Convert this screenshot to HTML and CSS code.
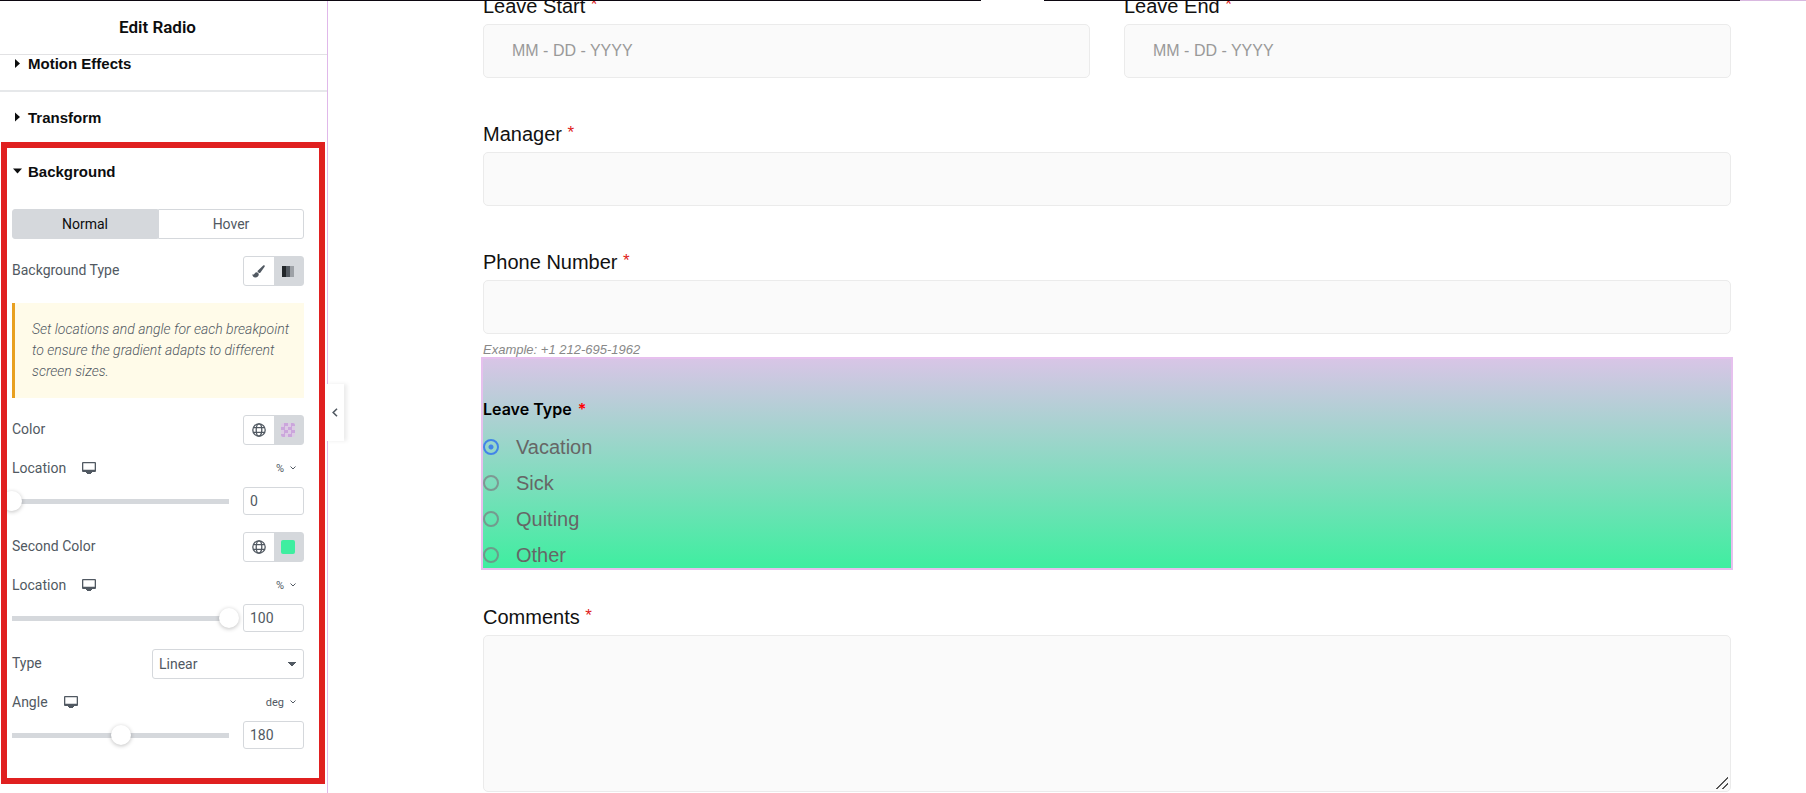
FILE: index.html
```html
<!DOCTYPE html>
<html lang="en">
  <head>
    <meta charset="utf-8" />
    <meta name="viewport" content="width=device-width, initial-scale=1.0" />
    <title>Edit Radio</title>
    <link rel="stylesheet" href="styles.css">
  </head>

  <body>
    <svg class="sprite" aria-hidden="true">
      <symbol id="icon-desktop" viewBox="0 0 14 12">
        <path d="M1 0h12a1 1 0 0 1 1 1v8a1 1 0 0 1-1 1h-3v1H9v1H5v-1H4v-1H1a1 1 0 0 1-1-1V1a1 1 0 0 1 1-1zm.3 1.2v6.600h11.400V1.200z" fill="currentColor" fill-rule="evenodd" />
      </symbol>
      <symbol id="icon-globe" viewBox="0 0 14 14">
        <g fill="none" stroke="currentColor" stroke-width="1.3">
          <circle cx="7" cy="7" r="6.2" />
          <ellipse cx="7" cy="7" rx="2.8" ry="6.2" />
          <path d="M1.4 4.6h11.2M1.4 9.4h11.2" />
        </g>
      </symbol>
      <symbol id="icon-chevron" viewBox="0 0 6 4">
        <path d="M.5.5L3 3 5.5.5" fill="none" stroke="currentColor" />
      </symbol>
    </svg>

    <div id="wrap">
      <aside class="panel">
        <h1>Edit Radio</h1>
        <button class="section motion" type="button">
          <span class="caret"></span>Motion Effects
        </button>
        <button class="section" type="button">
          <span class="caret"></span>Transform
        </button>

        <div class="highlight">
          <button class="section open" type="button">
            <span class="caret"></span>Background
          </button>

          <div class="tabs">
            <button class="active" type="button">Normal</button>
            <button type="button">Hover</button>
          </div>

          <div class="control">
            <span class="name">Background Type</span>
            <div class="choices">
              <button type="button" aria-label="Classic">
                <svg width="13" height="13" viewBox="0 0 13 13">
                  <path d="M12.5.4c.5.4.4.9.1 1.400L8.500 7.400c-.4.500-.9.700-1.400.5L5.800 6.900c-.4-.4-.3-.9.2-1.300L11.200.5c.4-.4.9-.4 1.300-.1zM5.100 7.300l1.700 1.500c.1 2.300-1.300 3.700-3.500 3.700C1.400 12.500.4 11 .3 9.200c.6.5 1.500.6 1.900-.1.5-1.100 1.600-2 2.900-1.800z" fill="currentColor" />
                </svg>
              </button>
              <button class="active" type="button" aria-label="Gradient">
                <span class="bars"></span>
              </button>
            </div>
          </div>

          <p class="notice">
            Set locations and angle for each breakpoint to ensure the gradient
            adapts to different screen sizes.
          </p>

          <div class="control">
            <span class="name">Color</span>
            <div class="choices">
              <button type="button" aria-label="Global color">
                <svg width="14" height="14"><use href="#icon-globe" /></svg>
              </button>
              <button class="active" type="button" aria-label="Pick color">
                <span class="swatch clear"></span>
              </button>
            </div>
          </div>
          <div class="control unit">
            <label for="firstLocation">Location</label>
            <svg class="device" width="14" height="12"><use href="#icon-desktop" /></svg>
            <button class="pick" type="button">
              % <svg width="6" height="4"><use href="#icon-chevron" /></svg>
            </button>
          </div>
          <div class="slider">
            <input type="range" id="firstLocation" min="0" max="100" value="0" />
            <input class="number" type="text" value="0" aria-label="Location" />
          </div>

          <div class="control">
            <span class="name">Second Color</span>
            <div class="choices">
              <button type="button" aria-label="Global color">
                <svg width="14" height="14"><use href="#icon-globe" /></svg>
              </button>
              <button class="active" type="button" aria-label="Pick color">
                <span class="swatch"></span>
              </button>
            </div>
          </div>
          <div class="control unit">
            <label for="secondLocation">Location</label>
            <svg class="device" width="14" height="12"><use href="#icon-desktop" /></svg>
            <button class="pick" type="button">
              % <svg width="6" height="4"><use href="#icon-chevron" /></svg>
            </button>
          </div>
          <div class="slider">
            <input type="range" id="secondLocation" min="0" max="100" value="100" />
            <input class="number" type="text" value="100" aria-label="Location" />
          </div>

          <div class="control">
            <label class="name" for="gradientType">Type</label>
            <select id="gradientType">
              <option>Linear</option>
              <option>Radial</option>
            </select>
          </div>
          <div class="control unit">
            <label for="angle">Angle</label>
            <svg class="device" width="14" height="12"><use href="#icon-desktop" /></svg>
            <button class="pick" type="button">
              deg <svg width="6" height="4"><use href="#icon-chevron" /></svg>
            </button>
          </div>
          <div class="slider">
            <input type="range" id="angle" min="0" max="360" value="180" />
            <input class="number" type="text" value="180" aria-label="Angle" />
          </div>
        </div>

        <button class="collapse" type="button" aria-label="Hide panel">
          <svg width="6" height="9" viewBox="0 0 6 9">
            <path d="M5 .8L1.2 4.5 5 8.2" fill="none" stroke="currentColor" stroke-width="1.6" />
          </svg>
        </button>
      </aside>

      <main class="preview">
        <form>
          <div class="row">
            <div class="field">
              <label for="leaveStart">Leave Start <sup>*</sup></label>
              <input type="text" id="leaveStart" placeholder="MM - DD - YYYY" />
            </div>
            <div class="field">
              <label for="leaveEnd">Leave End <sup>*</sup></label>
              <input type="text" id="leaveEnd" placeholder="MM - DD - YYYY" />
            </div>
          </div>
          <div class="field">
            <label for="manager">Manager <sup>*</sup></label>
            <input type="text" id="manager" />
          </div>
          <div class="field">
            <label for="phone">Phone Number <sup>*</sup></label>
            <input type="tel" id="phone" />
          </div>
          <p class="example">Example: +1 212-695-1962</p>

          <fieldset>
            <legend>Leave Type <span>*</span></legend>
            <label><input type="radio" name="leaveType" checked />Vacation</label>
            <label><input type="radio" name="leaveType" />Sick</label>
            <label><input type="radio" name="leaveType" />Quiting</label>
            <label><input type="radio" name="leaveType" />Other</label>
          </fieldset>

          <div class="field comments">
            <label for="comments">Comments <sup>*</sup></label>
            <textarea id="comments"></textarea>
          </div>
        </form>
      </main>
    </div>

    <div class="edge"><span></span><span></span><span></span></div>
  </body>
</html>
```
FILE: styles.css
```css
* {
  box-sizing: border-box;
}

body {
  margin: 0;
  height: 100vh;
  overflow: hidden;
  background: #fff;
  font-family: "Liberation Sans", Arial, sans-serif;
}

button,
input,
select,
textarea {
  font: inherit;
  color: inherit;
  margin: 0;
}

button {
  display: flex;
  align-items: center;
  justify-content: center;
  padding: 0;
  border: 0;
  background: none;
}

.sprite {
  display: none;
}

#wrap {
  display: flex;
  height: 100%;
}

/* dark strip along the top of the window */
.edge {
  position: absolute;
  top: 0;
  left: 0;
  width: 100%;
  height: 1px;
  display: grid;
  grid-template-columns: 981fr 63fr 696fr 66fr;
  background: #d9b8e0;
}

.edge span {
  background: #0c0710;
}

.edge span:nth-child(2) {
  background: #fff;
}

/* editor panel */
.panel {
  position: relative;
  flex: none;
  width: 328px;
  border-right: 1px solid #e0b8ea;
  color: #515962;
  font-family: Roboto, sans-serif;
  font-size: 14px;
}

h1 {
  height: 55px;
  margin: 0;
  padding-right: 12px;
  border-bottom: 1px solid #e2e2e4;
  color: #0c0d0e;
  font-size: 17px;
  font-weight: 600;
  line-height: 54px;
  text-align: center;
}

.section {
  justify-content: flex-start;
  width: 100%;
  height: 50px;
  padding-left: 13px;
  color: #0c0d0e;
  font-family: "Liberation Sans", Arial, sans-serif;
  font-size: 15px;
  font-weight: 700;
}

.section.motion {
  height: 37px;
  padding-bottom: 18px;
  border-bottom: 2px solid #e6e8ea;
}

.caret {
  width: 9px;
  height: 10px;
  margin-right: 6px;
  background: currentColor;
  clip-path: polygon(22% 5%, 78% 50%, 22% 95%);
}

.open .caret {
  clip-path: polygon(0 25%, 100% 25%, 50% 75%);
}

.highlight {
  display: flow-root;
  overflow: hidden;
  margin: 0 2px 0 1px;
  padding: 0 15px 12px 5px;
  border: 6px solid #e02020;
}

.highlight .section {
  height: 46px;
  padding-left: 1px;
}

.tabs {
  display: flex;
  height: 30px;
  margin: 15px 0 17px;
}

.tabs button {
  flex: 1;
  border: 1px solid #d5d8dc;
  border-radius: 0 3px 3px 0;
}

.tabs button:first-child {
  border-radius: 3px 0 0 3px;
}

.tabs .active {
  background: #d5d8dc;
  color: #0c0d0e;
}

.control {
  display: flex;
  align-items: center;
  justify-content: space-between;
  height: 30px;
}

.name {
  padding-bottom: 2px;
}

.choices {
  display: flex;
  width: 61px;
  height: 30px;
  border: 1px solid #d5d8dc;
  border-radius: 3px;
}

.choices button {
  flex: 1;
}

.choices .active {
  background: #d5d8dc;
}

.bars {
  width: 12px;
  height: 11px;
  background: linear-gradient(90deg, #222629 4px, #555b62 4px 8px, #9da1a6 8px);
}

.swatch {
  width: 14px;
  height: 14px;
  border-radius: 2px;
  background: #3feea0;
}

.swatch.clear {
  background: repeating-conic-gradient(#cba6dc 0 25%, #dccbe4 0 50%) 0 0 / 7px 7px;
}

.notice {
  margin: 17px 0;
  padding: 16px 8px 16px 17px;
  border-left: 3px solid #e8a020;
  background: #fffbe9;
  font-style: italic;
  font-weight: 300;
  line-height: 21px;
}

.unit {
  justify-content: flex-start;
  height: 26px;
  margin-top: 10px;
}

.device {
  margin-left: 16px;
}

.pick {
  gap: 6px;
  margin-left: auto;
  padding-right: 8px;
  font-size: 11px;
}

.slider {
  display: flex;
  align-items: center;
  justify-content: space-between;
  height: 28px;
  margin: 6px 0 17px;
}

input[type="range"] {
  appearance: none;
  flex: none;
  width: 237px;
  height: 20px;
  margin: 0 -10px;
  background: linear-gradient(#d5d8dc, #d5d8dc) center / 217px 5px no-repeat;
}

input[type="range"]::-webkit-slider-thumb {
  appearance: none;
  width: 20px;
  height: 20px;
  border-radius: 50%;
  background: #fff;
  box-shadow: 0 1px 4px rgba(0, 0, 0, 0.25);
}

.number {
  width: 61px;
  height: 28px;
  padding: 0 6px 1px;
  border: 1px solid #d5d8dc;
  border-radius: 3px;
}

select {
  appearance: none;
  width: 152px;
  height: 30px;
  padding: 0 6px 1px;
  border: 1px solid #d5d8dc;
  border-radius: 3px;
  background: conic-gradient(from -45deg at 50% 100%, #515962 90deg, transparent 0) right 6px center / 10px 5px no-repeat;
}

.collapse {
  position: absolute;
  top: 384px;
  left: 325px;
  width: 19px;
  height: 57px;
  background: #fff;
  box-shadow: 3px 0 4px rgba(0, 0, 0, 0.08);
}

/* form preview */
.preview {
  flex: 1;
  padding: 0 75px 0 155px;
}

.row {
  display: grid;
  grid-template-columns: 1fr 1fr;
  gap: 34px;
  margin-top: -50px;
}

.field {
  display: flex;
  flex-direction: column;
  padding-top: 44px;
}

.field label {
  height: 30px;
  color: #111;
  font-size: 20px;
  line-height: 24px;
}

sup {
  color: #e02020;
  font-size: 17px;
  line-height: 1;
  vertical-align: 3px;
}

.field input,
textarea {
  width: 100%;
  height: 54px;
  padding: 0 28px;
  border: 1px solid #ebebeb;
  border-radius: 5px;
  background: #fafafa;
  font-size: 16px;
}

.field input::placeholder {
  color: #999;
}

.field textarea {
  height: 157px;
}

textarea::-webkit-resizer {
  background: linear-gradient(135deg, transparent 50%, #555 50% 57%, transparent 57% 74%, #555 74% 81%, transparent 81%) 1px 1px / 12px 12px no-repeat;
}

.example {
  height: 23px;
  margin: 0;
  padding-top: 7px;
  color: #888;
  font-size: 13px;
  font-style: italic;
  line-height: 17px;
}

fieldset {
  display: flow-root;
  min-width: 0;
  margin: 0 -2px;
  padding: 39px 0 0;
  border: 2px solid #e6c0ee;
  background: linear-gradient(#d8c5e6, #3feea0) padding-box;
}

legend {
  float: left;
  width: 100%;
  height: 31px;
  padding: 0;
  color: #000;
  font-family: Inter, sans-serif;
  font-size: 16px;
  font-weight: 600;
  line-height: 22px;
}

legend span {
  margin-left: 2px;
  color: #f00;
}

fieldset label {
  clear: both;
  display: flex;
  align-items: center;
  height: 36px;
  color: #666;
  font-size: 20px;
}

fieldset label:last-child {
  height: 31px;
  padding-top: 5px;
}

input[type="radio"] {
  appearance: none;
  width: 16px;
  height: 16px;
  margin-right: 17px;
  border: 2px solid rgba(125, 115, 125, 0.65);
  border-radius: 50%;
}

input[type="radio"]:checked {
  border-color: #4285e8;
  background: radial-gradient(circle, #4285e8 2px, transparent 3px);
}

.comments {
  padding-top: 35px;
}
```
